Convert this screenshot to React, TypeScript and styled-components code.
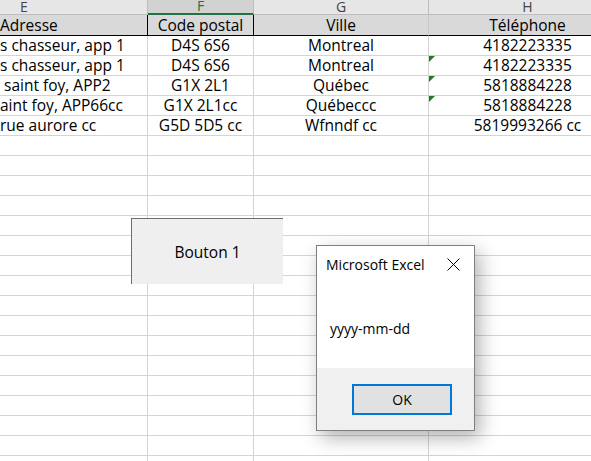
import React from "react";
import styled, { createGlobalStyle, css } from "styled-components";

const Global = createGlobalStyle`
  html, body { margin: 0; padding: 0; background: #ffffff; overflow: hidden; }
  body { width: 591px; height: 461px; font-family: "Open Sans", "Noto Sans", sans-serif; }
`;

const Page = styled.div`
  position: relative;
  width: 591px;
  height: 461px;
  overflow: hidden;
  background: #ffffff;
`;

const Sheet = styled.div`
  display: grid;
  grid-template-columns: 148px 106px 175px 198px;
  grid-auto-rows: 20px;
  grid-template-rows: 15px 21px;
  width: 627px;
`;

const ColHead = styled.div<{ $sel?: boolean; $start?: boolean }>`
  box-sizing: border-box;
  height: 15px;
  display: flex;
  align-items: center;
  justify-content: ${(p) => (p.$start ? "flex-start" : "center")};
  background: ${(p) => (p.$sel ? "#d2d2d2" : "#e6e6e6")};
  color: ${(p) => (p.$sel ? "#217346" : "#444444")};
  border-right: 1px solid #bdbdbd;
  border-bottom: ${(p) => (p.$sel ? "2px solid #217346" : "1px solid #bdbdbd")};
  font-size: 14px;
  line-height: 13px;
`;

const ColLetter = styled.span<{ $dx?: number }>`
  padding-left: ${(p) => p.$dx ?? 0}px;
  margin-top: -2px;
`;

const TitleCell = styled.div<{ $box?: boolean; $align?: string; $edge?: boolean }>`
  box-sizing: border-box;
  display: flex;
  align-items: center;
  justify-content: ${(p) => p.$align ?? "center"};
  background: #d9d9d9;
  border-bottom: 1px solid #000000;
  border-right: 1px solid ${(p) => (p.$box || p.$edge ? "#000000" : "#c8c8c8")};
  font-size: 15.5px;
  line-height: 20px;
  color: #000;
  white-space: pre;
`;

const Cell = styled.div<{ $align?: string; $flag?: boolean }>`
  position: relative;
  box-sizing: border-box;
  display: flex;
  align-items: center;
  justify-content: ${(p) => p.$align ?? "center"};
  border-right: 1px solid #d4d4d4;
  border-bottom: 1px solid #d4d4d4;
  font-size: 15.5px;
  line-height: 19px;
  color: #000;
  white-space: pre;
  ${(p) =>
    p.$flag &&
    css`
      &::before {
        content: "";
        position: absolute;
        left: 0;
        top: 0;
        width: 0;
        height: 0;
        border-top: 6px solid #1e7b2a;
        border-right: 6px solid transparent;
      }
    `}
`;

const FormButton = styled.div`
  position: absolute;
  left: 131px;
  top: 218px;
  width: 152px;
  height: 66px;
  box-sizing: border-box;
  background: #efefef;
  border-top: 1px solid #6e6e6e;
  border-left: 1px solid #6e6e6e;
  display: flex;
  align-items: center;
  justify-content: center;
  font-size: 15.5px;
  color: #000;
`;

const Dialog = styled.div`
  position: absolute;
  left: 316px;
  top: 245px;
  width: 159px;
  height: 186px;
  box-sizing: border-box;
  background: #ffffff;
  border: 1px solid #7f7f7f;
  box-shadow: 5px 7px 18px rgba(0, 0, 0, 0.3);
  display: flex;
  flex-direction: column;
`;

const TitleBar = styled.div`
  display: flex;
  align-items: center;
  justify-content: space-between;
  height: 36px;
  padding: 0 14px 0 9px;
  font-size: 14px;
  color: #000;
`;

const Body = styled.div`
  flex: 1;
  display: flex;
  align-items: center;
  padding: 6px 0 0 13px;
  font-size: 14px;
  color: #000;
`;

const Footer = styled.div`
  height: 62px;
  background: #f0f0f0;
  display: flex;
  align-items: flex-start;
  justify-content: flex-end;
  padding: 16px 22px 0 0;
  box-sizing: border-box;
`;

const OkButton = styled.div`
  width: 100px;
  height: 31px;
  box-sizing: border-box;
  border: 2px solid #0078d7;
  background: #e1e1e1;
  display: flex;
  align-items: center;
  justify-content: center;
  font-size: 14px;
  color: #000;
`;

type Row = { e: string; f: string; g: string; h: string; flag?: boolean };

const rows: Row[] = [
  { e: "s chasseur, app 1", f: "D4S 6S6", g: "Montreal", h: "4182223335" },
  { e: "s chasseur, app 1", f: "D4S 6S6", g: "Montreal", h: "4182223335", flag: true },
  { e: " saint foy, APP2", f: "G1X 2L1", g: "Québec", h: "5818884228", flag: true },
  { e: "aint foy, APP66cc", f: "G1X 2L1cc", g: "Québeccc", h: "5818884228", flag: true },
  { e: "rue aurore cc", f: "G5D 5D5 cc", g: "Wfnndf cc", h: "5819993266 cc" },
];

const EMPTY_ROWS = 17;

export default function App() {
  return (
    <Page>
      <Global />
      <Sheet>
        <ColHead $start>
          <ColLetter $dx={20}>E</ColLetter>
        </ColHead>
        <ColHead $sel>
          <ColLetter>F</ColLetter>
        </ColHead>
        <ColHead>
          <ColLetter>G</ColLetter>
        </ColHead>
        <ColHead>
          <ColLetter>H</ColLetter>
        </ColHead>

        <TitleCell $align="flex-start" $edge>Adresse</TitleCell>
        <TitleCell $box>Code postal</TitleCell>
        <TitleCell>Ville</TitleCell>
        <TitleCell>Téléphone</TitleCell>

        {rows.map((r, i) => (
          <React.Fragment key={i}>
            <Cell $align="flex-start">{r.e}</Cell>
            <Cell>{r.f}</Cell>
            <Cell>{r.g}</Cell>
            <Cell $flag={r.flag}>{r.h}</Cell>
          </React.Fragment>
        ))}
        {Array.from({ length: EMPTY_ROWS }).map((_, i) => (
          <React.Fragment key={`e${i}`}>
            <Cell />
            <Cell />
            <Cell />
            <Cell />
          </React.Fragment>
        ))}
      </Sheet>

      <FormButton>Bouton 1</FormButton>

      <Dialog>
        <TitleBar>
          <span>Microsoft Excel</span>
          <svg width="13" height="13" viewBox="0 0 13 13">
            <path d="M0.5 0.5 L12.5 12.5 M12.5 0.5 L0.5 12.5" stroke="#000" strokeWidth="1" />
          </svg>
        </TitleBar>
        <Body>yyyy-mm-dd</Body>
        <Footer>
          <OkButton>OK</OkButton>
        </Footer>
      </Dialog>
    </Page>
  );
}
